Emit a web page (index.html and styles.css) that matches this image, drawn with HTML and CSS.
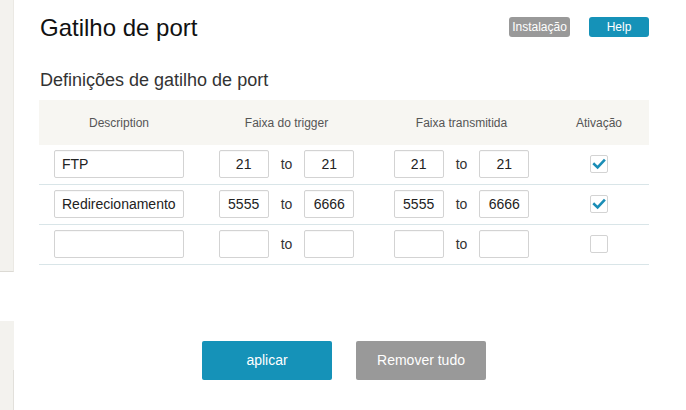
FILE: index.html
```html
<!DOCTYPE html>
<html lang="pt">
<head>
<meta charset="utf-8">
<title>Gatilho de port</title>
<link rel="stylesheet" href="styles.css">
</head>
<body>
<div class="page">
  <aside class="side">
    <div class="side-top"></div>
    <div class="side-bottom"><div class="side-line"></div></div>
  </aside>
  <main class="main">
    <header class="head">
      <h1 class="title">Gatilho de port</h1>
      <div class="head-btns">
        <span class="pill pill-gray">Instalação</span>
        <span class="pill pill-blue">Help</span>
      </div>
    </header>
    <h2 class="subtitle">Definições de gatilho de port</h2>
    <div class="table">
      <div class="row hdr">
        <div class="c c1">Description</div>
        <div class="c c2">Faixa do trigger</div>
        <div class="c c3">Faixa transmitida</div>
        <div class="c c4">Ativação</div>
      </div>
      <div class="row">
        <div class="c c1"><div class="inp desc">FTP</div></div>
        <div class="c c2"><div class="inp num">21</div><span class="to">to</span><div class="inp num">21</div></div>
        <div class="c c3"><div class="inp num">21</div><span class="to">to</span><div class="inp num">21</div></div>
        <div class="c c4"><div class="chk on"><svg viewBox="0 0 18 18" width="18" height="18"><path d="M4.2 9.2 L7.6 12.4 L14 5.6" fill="none" stroke="#1a8db6" stroke-width="2.6" stroke-linecap="square" stroke-linejoin="miter"/></svg></div></div>
      </div>
      <div class="row">
        <div class="c c1"><div class="inp desc">Redirecionamento</div></div>
        <div class="c c2"><div class="inp num">5555</div><span class="to">to</span><div class="inp num">6666</div></div>
        <div class="c c3"><div class="inp num">5555</div><span class="to">to</span><div class="inp num">6666</div></div>
        <div class="c c4"><div class="chk on"><svg viewBox="0 0 18 18" width="18" height="18"><path d="M4.2 9.2 L7.6 12.4 L14 5.6" fill="none" stroke="#1a8db6" stroke-width="2.6" stroke-linecap="square" stroke-linejoin="miter"/></svg></div></div>
      </div>
      <div class="row">
        <div class="c c1"><div class="inp desc"></div></div>
        <div class="c c2"><div class="inp num"></div><span class="to">to</span><div class="inp num"></div></div>
        <div class="c c3"><div class="inp num"></div><span class="to">to</span><div class="inp num"></div></div>
        <div class="c c4"><div class="chk"></div></div>
      </div>
    </div>
    <div class="actions">
      <span class="btn btn-blue">aplicar</span>
      <span class="btn btn-gray">Remover tudo</span>
    </div>
  </main>
</div>
</body>
</html>
```
FILE: styles.css
```css
html, body {
  margin: 0;
  padding: 0;
  background: #fff;
  font-family: Arial, "Liberation Sans", sans-serif;
}
.page {
  display: flex;
  width: 686px;
  height: 410px;
  overflow: hidden;
}
.side {
  width: 14px;
  flex: none;
  display: flex;
  flex-direction: column;
}
.side-top {
  height: 271px;
  background: #f3f2ee;
  border-bottom: 1px solid #dcdad4;
  border-right: 1px solid #ebe9e4;
  box-sizing: border-box;
  height: 272px;
}
.side-bottom {
  margin-top: 49px;
  flex: 1;
  background: #f3f2ee;
  display: flex;
  justify-content: flex-end;
}
.side-line {
  width: 1px;
  margin-top: 49px;
  background: #e2e0db;
}
.main {
  width: 610px;
  padding-left: 25px;
  display: flex;
  flex-direction: column;
}
.head {
  display: flex;
  align-items: flex-start;
  justify-content: space-between;
  height: 60px;
}
.title {
  margin: 14px 0 0 1px;
  font-size: 24px;
  font-weight: normal;
  color: #111;
  line-height: 28px;
}
.head-btns {
  display: flex;
  gap: 19px;
  margin-top: 17px;
}
.pill {
  height: 20px;
  line-height: 20px;
  border-radius: 3px;
  color: #fff;
  font-size: 12px;
  text-align: center;
}
.pill-gray { width: 61px; background: #999; }
.pill-blue { width: 60px; background: #1592b8; }
.subtitle {
  margin: 9px 0 0 1px;
  font-size: 18px;
  font-weight: normal;
  color: #333;
  line-height: 22px;
}
.table {
  margin-top: 9px;
  width: 610px;
}
.row {
  display: flex;
  height: 40px;
  border-bottom: 1px solid #d9e5e8;
  box-sizing: border-box;
}
.row.hdr {
  height: 45px;
  background: #f7f6f2;
  border-bottom: none;
  font-size: 12px;
  color: #555;
}
.c {
  display: flex;
  align-items: center;
  justify-content: center;
}
.row:not(.hdr) .c { padding-bottom: 1px; }
.c1 { width: 160px; }
.c2, .c3 { width: 175px; }
.c4 { width: 100px; }
.inp {
  height: 28px;
  box-sizing: border-box;
  border: 1px solid #d3d3d3;
  border-radius: 2px;
  background: #fff;
  font-size: 14px;
  color: #222;
  line-height: 26px;
  box-shadow: inset 0 1px 1px rgba(0,0,0,0.03);
}
.desc {
  width: 130px;
  padding-left: 7px;
  white-space: nowrap;
  overflow: hidden;
}
.num {
  width: 50px;
  text-align: center;
}
.to {
  font-size: 14px;
  color: #333;
  margin: 0 12px;
}
.chk {
  width: 18px;
  height: 18px;
  box-sizing: border-box;
  border: 1px solid #d3d3d3;
  border-radius: 2px;
  background: #fff;
  position: relative;
}
.chk svg {
  position: absolute;
  left: -1px;
  top: -1px;
}
.actions {
  display: flex;
  justify-content: center;
  gap: 24px;
  margin-top: 76px;
}
.btn {
  width: 130px;
  height: 39px;
  line-height: 39px;
  text-align: center;
  color: #fff;
  font-size: 14px;
  border-radius: 2px;
}
.btn-blue { background: #1592b8; }
.btn-gray { background: #999; }
```
